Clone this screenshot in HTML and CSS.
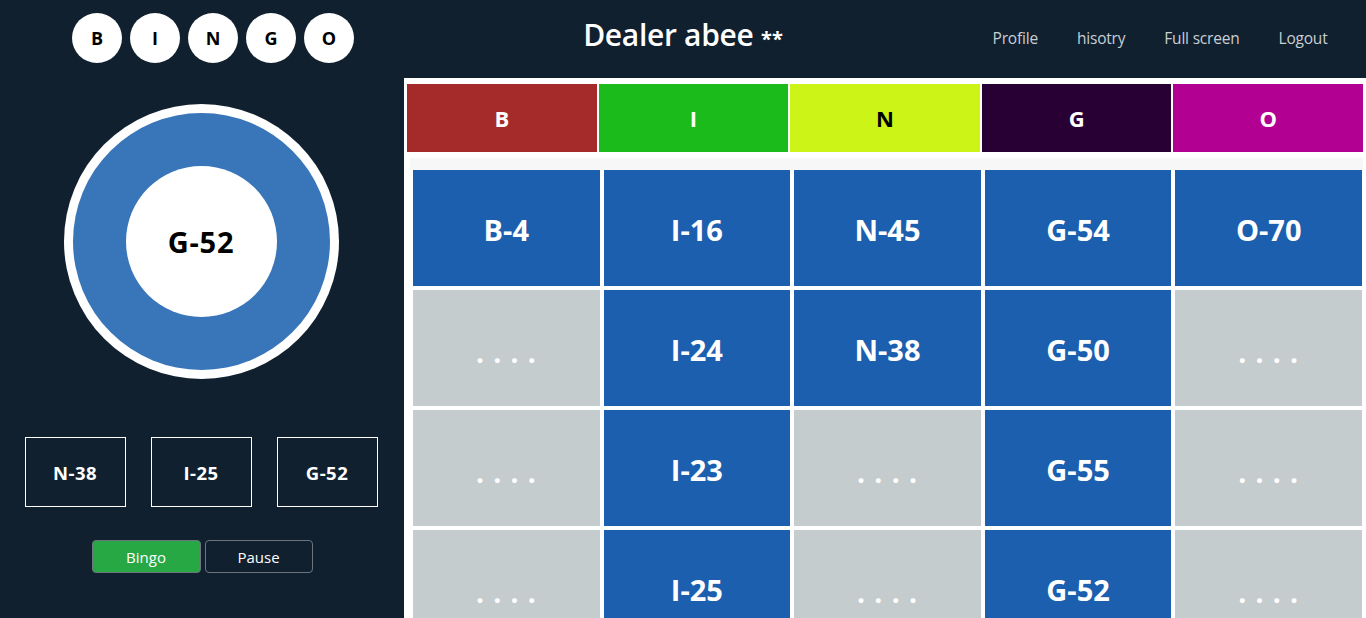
FILE: index.html
```html
<!DOCTYPE html>
<html lang="en">
<head>
<meta charset="utf-8">
<title>Dealer</title>
<link rel="stylesheet" href="styles.css">
</head>
<body>
<header class="topbar">
  <div class="balls">
    <span class="ball">B</span><span class="ball">I</span><span class="ball">N</span><span class="ball">G</span><span class="ball">O</span>
  </div>
  <h1 class="title">Dealer abee <small>**</small></h1>
  <nav class="nav">
    <a href="#">Profile</a>
    <a href="#">hisotry</a>
    <a href="#">Full screen</a>
    <a href="#">Logout</a>
  </nav>
</header>
<main class="main">
  <aside class="side">
    <div class="wheel"><div class="wheel-ring"><div class="wheel-core">G-52</div></div></div>
    <div class="recent">
      <div class="recent-box">N-38</div>
      <div class="recent-box">I-25</div>
      <div class="recent-box">G-52</div>
    </div>
    <div class="actions">
      <button class="btn btn-green">Bingo</button>
      <button class="btn btn-outline">Pause</button>
    </div>
  </aside>
  <section class="board">
    <div class="heads">
      <div class="head h-b">B</div>
      <div class="head h-i">I</div>
      <div class="head h-n">N</div>
      <div class="head h-g">G</div>
      <div class="head h-o">O</div>
    </div>
    <div class="body">
      <div class="strip"></div>
      <div class="grid">
        <div class="cell on">B-4</div>
        <div class="cell on">I-16</div>
        <div class="cell on">N-45</div>
        <div class="cell on">G-54</div>
        <div class="cell on">O-70</div>

        <div class="cell off">. . . .</div>
        <div class="cell on">I-24</div>
        <div class="cell on">N-38</div>
        <div class="cell on">G-50</div>
        <div class="cell off">. . . .</div>

        <div class="cell off">. . . .</div>
        <div class="cell on">I-23</div>
        <div class="cell off">. . . .</div>
        <div class="cell on">G-55</div>
        <div class="cell off">. . . .</div>

        <div class="cell off">. . . .</div>
        <div class="cell on">I-25</div>
        <div class="cell off">. . . .</div>
        <div class="cell on">G-52</div>
        <div class="cell off">. . . .</div>
      </div>
    </div>
  </section>
</main>
</body>
</html>
```

FILE: styles.css
```css
* { box-sizing: border-box; }
html, body { margin: 0; padding: 0; }
body {
  background: #10202f;
  font-family: "Open Sans", "Noto Sans", sans-serif;
  color: #fff;
  width: 1366px;
  height: 618px;
  overflow: hidden;
}

.topbar {
  height: 78px;
  display: grid;
  grid-template-columns: 1fr auto 1fr;
  align-items: start;
}
.balls {
  display: flex;
  gap: 8px;
  padding: 13px 0 0 72px;
}
.ball {
  width: 50px;
  height: 50px;
  border-radius: 50%;
  background: #fff;
  color: #000;
  font-weight: 700;
  font-size: 18px;
  display: flex;
  align-items: center;
  justify-content: center;
}
.title {
  margin: 0;
  padding-top: 13px;
  font-size: 30px;
  font-weight: 600;
  line-height: 44px;
  letter-spacing: -0.3px;
}
.title small {
  font-size: 20px;
  font-weight: 700;
  letter-spacing: 0;
}
.nav {
  display: flex;
  justify-content: flex-end;
  padding: 26px 19px 0 0;
}
.nav a {
  color: #c9ced3;
  text-decoration: none;
  font-size: 15.5px;
  line-height: 24px;
  padding: 0 19.5px;
  letter-spacing: -0.2px;
}

.main {
  display: grid;
  grid-template-columns: 404px 1fr;
  height: 540px;
}
.side {
  display: flex;
  flex-direction: column;
  align-items: center;
  padding-top: 26px;
}
.wheel {
  width: 275px;
  height: 275px;
  border-radius: 50%;
  background: #fff;
  padding: 9px;
  margin-left: -2px;
}
.wheel-ring {
  width: 100%;
  height: 100%;
  border-radius: 50%;
  background: #3875b9;
  display: flex;
  align-items: center;
  justify-content: center;
}
.wheel-core {
  width: 151px;
  height: 151px;
  border-radius: 50%;
  background: #fff;
  color: #000;
  font-weight: 700;
  font-size: 29px;
  letter-spacing: 0.8px;
  display: flex;
  align-items: center;
  justify-content: center;
}
.recent {
  display: flex;
  gap: 25px;
  margin-top: 58px;
  margin-left: -2px;
}
.recent-box {
  width: 101px;
  height: 70px;
  border: 1px solid #fff;
  display: flex;
  align-items: center;
  justify-content: center;
  font-weight: 700;
  font-size: 18.5px;
  letter-spacing: 0.5px;
}
.actions {
  display: flex;
  gap: 4px;
  margin-top: 33px;
}
.btn {
  width: 109px;
  height: 33px;
  border-radius: 4px;
  font-family: inherit;
  font-size: 15px;
  color: #fff;
  border: 1px solid #6c757d;
  padding: 0;
}
.btn-green { background: #28a745; }
.btn-outline { background: transparent; width: 108px; }

.board {
  background: #fff;
  overflow: hidden;
}
.heads {
  display: grid;
  grid-template-columns: repeat(5, 1fr);
  gap: 2px;
  padding: 6px 3px 0 3px;
}
.head {
  height: 68px;
  display: flex;
  align-items: center;
  justify-content: center;
  font-weight: 700;
  font-size: 22px;
  color: #fff;
}
.h-b { background: #a52b2b; }
.h-i { background: #1cbb1c; }
.h-n { background: #ccf417; color: #000; }
.h-g { background: #290034; }
.h-o { background: #b10092; }

.body {
  padding: 6px 3px 0 6px;
}
.strip {
  height: 12px;
  background: #f7f7f7;
}
.grid {
  display: grid;
  grid-template-columns: repeat(5, 1fr);
  grid-auto-rows: 116px;
  gap: 4px;
  padding: 0 1px 0 3px;
}
.cell {
  display: flex;
  align-items: center;
  justify-content: center;
  font-weight: 700;
  font-size: 29px;
  color: #fff;
}
.on { background: #1c5faf; padding-top: 2px; }
.off { background: #c5cccd; }
.off { padding-top: 8px; letter-spacing: 1px; font-size: 28px; }
```
